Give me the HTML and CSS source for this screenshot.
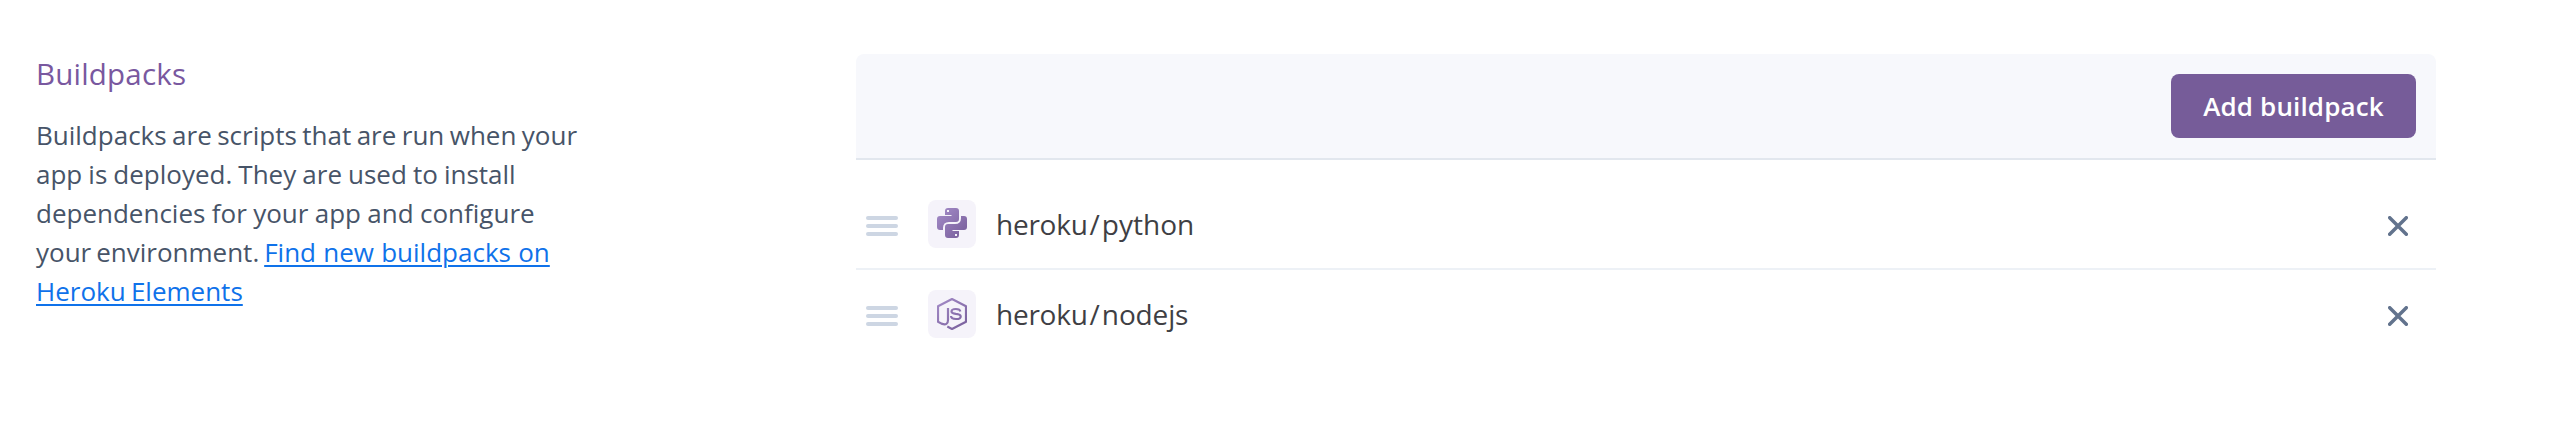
FILE: index.html
```html
<!DOCTYPE html>
<html lang="en">
<head>
<meta charset="utf-8">
<title>Buildpacks</title>
<link rel="stylesheet" href="styles.css">
</head>
<body>
<main class="settings">
  <section class="intro">
    <h2 class="title">Buildpacks</h2>
    <p class="description">
      <span class="line tight">Buildpacks are scripts that are run when your</span>
      <span class="line even">app is deployed. They are used to install</span>
      <span class="line close">dependencies for your app and configure</span>
      <span class="line"><span class="lead">your environment. </span><a class="link wide" href="#">Find new buildpacks on</a></span>
      <span class="line"><a class="link narrow" href="#">Heroku Elements</a></span>
    </p>
  </section>
  <section class="panel">
    <header class="panel-header">
      <button class="add" type="button">Add buildpack</button>
    </header>
    <ul class="list">
      <li class="item">
        <span class="handle"><i class="bar"></i><i class="bar"></i><i class="bar"></i></span>
        <span class="badge">
          <svg width="30" height="30" viewBox="0 0 30 30">
            <defs>
              <linearGradient id="py" gradientUnits="userSpaceOnUse" x1="0" y1="0" x2="30" y2="30">
                <stop offset="0" stop-color="#a58dc9"/><stop offset="1" stop-color="#765c99"/>
              </linearGradient>
            </defs>
            <path fill="url(#py)" fill-rule="evenodd" d="M8 3Q8 0 11 0H19Q22 0 22 3V11Q22 14 19 14H12Q6 14 6 20V22H3Q0 22 0 19V11Q0 8 3 8H14.500V7H8ZM10 2V4H12V2Z"/>
            <path fill="url(#py)" fill-rule="evenodd" d="M22 27Q22 30 19 30H11Q8 30 8 27V19Q8 16 11 16H18Q24 16 24 10V8H27Q30 8 30 11V19Q30 22 27 22H15.500V23H22ZM20 28V26H18V28Z"/>
          </svg>
        </span>
        <span class="name"><span class="owner">heroku</span><span class="slash">/</span><span>python</span></span>
        <svg class="remove" width="20" height="20" viewBox="0 0 20 20"><path d="M1.700 1.700L18.300 18.300M18.300 1.700L1.700 18.300"/></svg>
      </li>
      <li class="item">
        <span class="handle"><i class="bar"></i><i class="bar"></i><i class="bar"></i></span>
        <span class="badge">
          <svg width="30" height="32" viewBox="0 0 30 32">
            <defs>
              <linearGradient id="js" gradientUnits="userSpaceOnUse" x1="0" y1="0" x2="30" y2="32">
                <stop offset="0" stop-color="#a58dc9"/><stop offset="1" stop-color="#765c99"/>
              </linearGradient>
            </defs>
            <g fill="none" stroke="url(#js)" stroke-width="2.200" stroke-linejoin="round">
              <path d="M10.300 28.600L15 31L29 23.700V8.300L15 1L1 8.300V23.700L4.500 25.600Q11 28 11 22V10"/>
              <path d="M23.300 13.500Q23 11 18.800 11Q14.500 11 14.500 13.400Q14.500 15.200 18.800 15.800Q23.700 16.200 23.700 18.400Q23.700 21 19 21Q14.100 21 14 18"/>
            </g>
          </svg>
        </span>
        <span class="name"><span class="owner">heroku</span><span class="slash">/</span><span class="node">nodejs</span></span>
        <svg class="remove" width="20" height="20" viewBox="0 0 20 20"><path d="M1.700 1.700L18.300 18.300M18.300 1.700L1.700 18.300"/></svg>
      </li>
    </ul>
  </section>
</main>
</body>
</html>
```
FILE: styles.css
```css
* { box-sizing: border-box; }
body {
  margin: 0;
  background: #fff;
  font-family: "Open Sans", "Noto Sans", sans-serif;
}
.settings {
  display: grid;
  grid-template-columns: 820px 1580px;
  padding: 54px 126px 0 36px;
}
.title {
  margin: 0;
  color: #79589f;
  font-size: 29.500px;
  font-weight: 400;
  line-height: 40px;
  letter-spacing: 0.200px;
}
.description {
  margin: 22px 0 0;
  color: #475468;
  font-size: 26px;
  line-height: 39px;
}
.line { display: block; white-space: nowrap; }
.tight { word-spacing: -1.300px; }
.even { word-spacing: -0.700px; }
.close { word-spacing: -0.400px; }
.lead { word-spacing: -1.800px; }
.link {
  color: #0f72ea;
  text-decoration: underline;
  text-decoration-thickness: 2px;
  text-underline-offset: 3px;
}
.wide { word-spacing: 0.500px; }
.narrow { word-spacing: -1.500px; }
.panel-header {
  display: flex;
  align-items: center;
  justify-content: flex-end;
  height: 106px;
  padding: 0 20px;
  border-bottom: 2px solid #e2e7ee;
  border-radius: 8px 8px 0 0;
  background: #f7f8fc;
}
.add {
  width: 245px;
  height: 64px;
  padding: 0;
  border: 0;
  border-radius: 8px;
  background: #765c99;
  color: #fff;
  font: 600 26px/63px "Open Sans", sans-serif;
  letter-spacing: 0.150px;
}
.list { margin: 0; padding: 20px 0 0; list-style: none; }
.item {
  display: flex;
  align-items: center;
  height: 88px;
  padding: 0 28px 0 10px;
}
.item:first-child {
  height: 90px;
  border-bottom: 2px solid #edf1f6;
}
.handle { display: grid; gap: 4px; width: 32px; padding-top: 4px; }
.bar { height: 4px; border-radius: 2px; background: #cdd6e3; }
.badge {
  display: flex;
  justify-content: center;
  width: 48px;
  height: 48px;
  margin-left: 30px;
  padding-top: 8px;
  border-radius: 8px;
  background: #f5f3fa;
}
.name {
  flex: 1;
  margin: -1px 0 0 20px;
  color: #3f3f44;
  font-size: 28px;
  line-height: 40px;
}
.owner { letter-spacing: -0.250px; }
.slash { margin: 0 2px 0 2px; }
.node { letter-spacing: -0.150px; }
.remove {
  margin-top: 4px;
  fill: none;
  stroke: #62738d;
  stroke-width: 3.500;
  stroke-linecap: round;
}
```
